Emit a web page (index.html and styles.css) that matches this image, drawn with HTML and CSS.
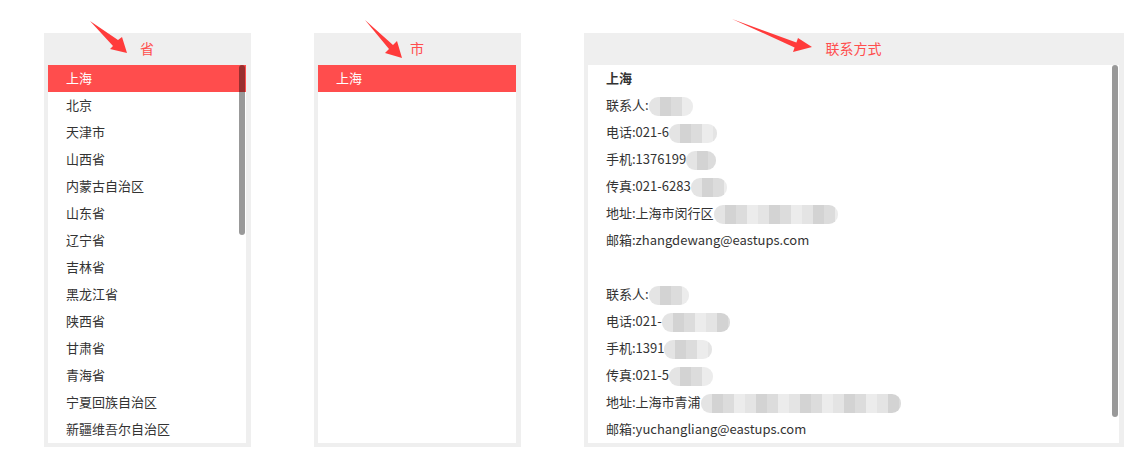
FILE: index.html
```html
<!DOCTYPE html>
<html>
<head>
<meta charset="utf-8">
<link rel="stylesheet" href="styles.css">
</head>
<body>

<div class="page">

  <div class="panel">
    <div class="panel-head">省</div>
    <div class="box">
      <ul class="list">
        <li class="active">上海</li>
        <li>北京</li>
        <li>天津市</li>
        <li>山西省</li>
        <li>内蒙古自治区</li>
        <li>山东省</li>
        <li>辽宁省</li>
        <li>吉林省</li>
        <li>黑龙江省</li>
        <li>陕西省</li>
        <li>甘肃省</li>
        <li>青海省</li>
        <li>宁夏回族自治区</li>
        <li>新疆维吾尔自治区</li>
      </ul>
      <div class="thumb thumb-short"></div>
    </div>
  </div>

  <div class="panel">
    <div class="panel-head">市</div>
    <div class="box">
      <ul class="list">
        <li class="active">上海</li>
      </ul>
    </div>
  </div>

  <div class="panel panel-wide">
    <div class="panel-head">联系方式</div>
    <div class="box">
      <div class="contact">
        <p class="city">上海</p>
        <p>联系人:<span class="blur w44"></span></p>
        <p>电话:021-6<span class="blur w48"></span></p>
        <p>手机:1376199<span class="blur w30"></span></p>
        <p>传真:021-6283<span class="blur w36"></span></p>
        <p>地址:上海市闵行区<span class="blur w124"></span></p>
        <p>邮箱:zhangdewang@eastups.com</p>
        <p class="gap"></p>
        <p>联系人:<span class="blur w40"></span></p>
        <p>电话:021-<span class="blur w68"></span></p>
        <p>手机:1391<span class="blur w48"></span></p>
        <p>传真:021-5<span class="blur w44"></span></p>
        <p>地址:上海市青浦<span class="blur w200"></span></p>
        <p>邮箱:yuchangliang@eastups.com</p>
      </div>
      <div class="thumb thumb-long"></div>
    </div>
  </div>

</div>

<!-- red annotation arrows drawn over the headers -->
<svg class="arrows" width="1144" height="461" viewBox="0 0 1144 461">
  <polygon points="90,21 118,40 122,37 127,53 110,49 113,46" />
  <polygon points="365,20 393,45 397,41 402,58 385,53 389,49" />
  <polygon points="732,19 796.4,42.6 798,38 812,47 793,52 794.6,47.4" />
</svg>

</body>
</html>
```

FILE: styles.css
```css
body {
  margin: 0;
  background: #fff;
  font-family: "Noto Sans CJK SC", "Microsoft YaHei", sans-serif;
  font-size: 13px;
  color: #333;
}

.page {
  display: flex;
  gap: 63px;
  padding: 33px 0 0 44px;
}

.panel {
  width: 198px;
  padding: 0 5px 4px 4px;
  background: #efefef;
}

.panel-wide {
  width: 531px;
}

.panel-head {
  height: 30px;
  line-height: 30px;
  padding-bottom: 2px;
  text-align: center;
  font-size: 14px;
  color: #ff4d4d;
}

.box {
  position: relative;
  height: 378px;
  background: #fff;
  overflow: hidden;
}

.list {
  list-style: none;
  margin: 0;
  padding: 0;
}

.list li {
  height: 25px;
  line-height: 25px;
  padding: 0 0 2px 18px;
}

.list li.active {
  background: #ff4d4d;
  color: #fff;
}

/* scrollbar thumb, drawn over the list */
.thumb {
  position: absolute;
  top: 0;
  right: 1px;
  width: 6px;
  border-radius: 3px;
  background: rgba(0, 0, 0, 0.4);
}

.thumb-short {
  height: 170px;
}

.thumb-long {
  height: 352px;
}

.contact {
  padding-left: 18px;
}

.contact p {
  margin: 0;
  height: 25px;
  line-height: 25px;
  padding-bottom: 2px;
  white-space: nowrap;
}

.contact .city {
  font-weight: bold;
}

.blur {
  display: inline-block;
  height: 19px;
  vertical-align: middle;
  border-radius: 9px;
  background: repeating-linear-gradient(90deg, #e4e4e4 0 11px, #d3d3d3 11px 22px, #dcdcdc 22px 33px, #ececec 33px 44px);
}

.w30 { width: 30px; }
.w36 { width: 36px; }
.w40 { width: 40px; }
.w44 { width: 44px; }
.w48 { width: 48px; }
.w68 { width: 68px; }
.w124 { width: 124px; }
.w200 { width: 200px; }

.arrows {
  position: absolute;
  left: 0;
  top: 0;
  pointer-events: none;
  fill: #ff3b3b;
}
```
